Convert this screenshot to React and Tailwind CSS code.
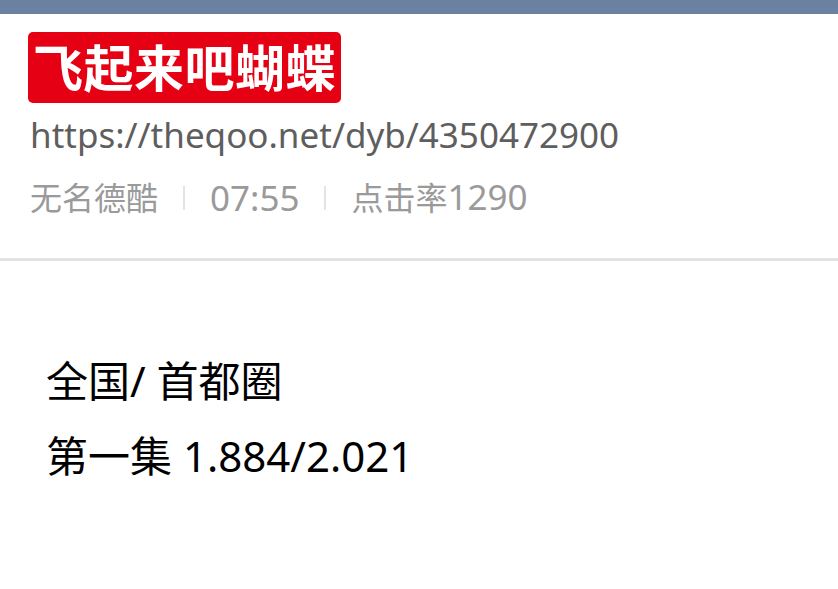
export default function App() {
  const cjk = { fontFamily: '"Noto Sans", "Noto Sans CJK SC", sans-serif' };
  return (
    <div className="w-[838px] h-[589px] bg-white overflow-hidden relative" style={cjk}>
      <div className="h-[14px] bg-[#6a81a1]" />
      <div className="pl-[28px] pt-[18px]">
        <div className="inline-flex items-center h-[71px] px-[5px] rounded-[5px] bg-[#e60014] text-white font-bold text-[50px] leading-none tracking-[0.5px]">
          飞起来吧蝴蝶
        </div>
        <div className="mt-[10px] pl-[2px] text-[35px] leading-[44px] text-[#5e5e5e]">
          https://theqoo.net/dyb/4350472900
        </div>
        <div className="mt-[18px] pl-[2px] flex items-center text-[32px] leading-[44px] text-[#9a9a9a]">
          <span>无名德酷</span>
          <span className="mx-[25px] w-[2px] h-[24px] bg-[#e4e4e4]" />
          <span className="text-[35px]">07:55</span>
          <span className="mx-[25px] w-[2px] h-[24px] bg-[#e4e4e4]" />
          <span>点击率<span className="text-[35px]">1290</span></span>
        </div>
      </div>
      <div className="mt-[38px] h-[3px] bg-[#e3e3e3]" />
      <div className="pl-[46px] pt-[82px] text-[42px] leading-[75px] text-black">
        <div>全国/ 首都圈</div>
        <div>第一集 1.884/2.021</div>
      </div>
    </div>
  );
}
